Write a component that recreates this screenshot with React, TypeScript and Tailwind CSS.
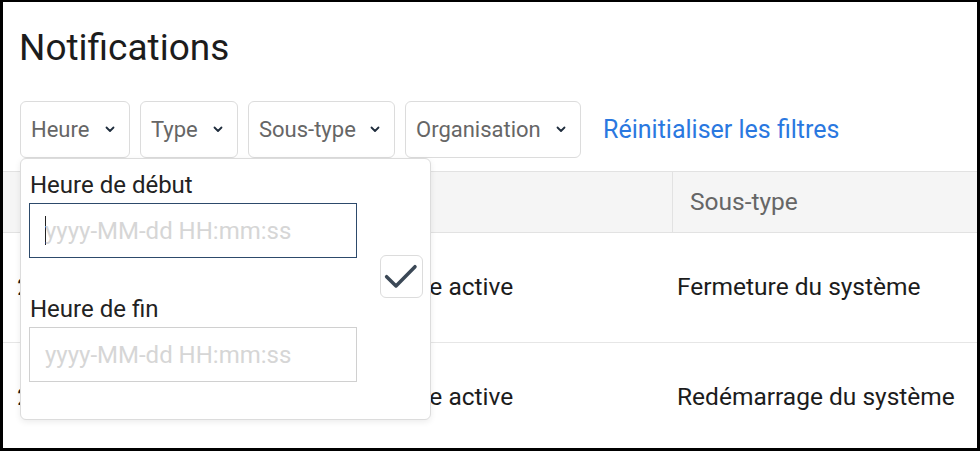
import { useState } from "react";

const font = { fontFamily: "Roboto, 'Noto Sans', sans-serif" };

const filters = [
  { label: "Heure", width: "w-[110px]" },
  { label: "Type", width: "w-[98px]" },
  { label: "Sous-type", width: "w-[147px]" },
  { label: "Organisation", width: "w-[176px]" },
];

const rows = [
  { date: "2024-03-12 08:14:52", type: "Licence active", subtype: "Fermeture du système" },
  { date: "2024-03-12 07:58:03", type: "Licence active", subtype: "Redémarrage du système" },
];

function Chevron() {
  return (
    <svg width="10" height="7" viewBox="0 0 10 7" fill="none">
      <polyline points="1.5,1.5 5,5 8.5,1.5" stroke="#1f2d3d" strokeWidth="1.8" strokeLinecap="round" strokeLinejoin="round" />
    </svg>
  );
}

function DateInput({ focused }: { focused?: boolean }) {
  return (
    <div
      className={`mt-[3px] flex h-[55px] w-[328px] items-center border px-[15px] ${
        focused ? "border-[#2d4a6b]" : "border-[#d0d0d0]"
      }`}
    >
      {focused && <span className="mr-[-1px] h-[29px] w-px bg-[#222]" />}
      <span className="text-[24px] leading-[28px] text-[#d6d6d6]">yyyy-MM-dd HH:mm:ss</span>
    </div>
  );
}

export default function App() {
  const [open] = useState(true);

  return (
    <div className="h-[451px] w-[980px] bg-black pb-[3px] pl-[3px] pr-[3px] pt-[2px]" style={font}>
      <div className="relative h-full w-full overflow-hidden bg-white">
        <h1 className="pl-[16px] pt-[24px] text-[37px] font-normal leading-[44px] text-[#1c1c1c]">Notifications</h1>

        <div className="mt-[31px] flex items-center gap-[10px] pl-[17px]">
          {filters.map((f) => (
            <button
              key={f.label}
              className={`flex h-[57px] items-center justify-between rounded-md border border-[#dcdcdc] bg-white pl-[10px] pr-[14px] ${f.width}`}
            >
              <span className="text-[22px] text-[#666]">{f.label}</span>
              <Chevron />
            </button>
          ))}
          <a className="ml-[12px] text-[25px] text-[#2a78e0]">Réinitialiser les filtres</a>
        </div>

        <div className="mt-[13px]">
          <div className="flex h-[62px] border-y border-[#e2e2e2] bg-[#f5f5f5] text-[24.5px] text-[#666]">
            <div className="flex w-[300px] items-center pl-[18px]">Heure</div>
            <div className="flex w-[369px] items-center pl-[55px]">Type</div>
            <div className="flex flex-1 items-center border-l border-[#e2e2e2] pl-[17px]">Sous-type</div>
          </div>
          {rows.map((r) => (
            <div key={r.subtype} className="flex h-[110px] border-b border-[#e6e6e6] text-[24.5px] text-[#1c1c1c]">
              <div className="flex w-[300px] items-center pl-[14px]">{r.date}</div>
              <div className="flex w-[369px] items-center pl-[55px]">{r.type}</div>
              <div className="flex flex-1 items-center pl-[5px]">{r.subtype}</div>
            </div>
          ))}
        </div>

        {open && (
          <div className="absolute left-[17px] top-[156px] flex w-[411px] items-center rounded-md border border-[#dcdcdc] bg-white pb-[37px] pl-[8px] pr-[7px] pt-[11px] shadow-[0_2px_6px_rgba(0,0,0,0.08)]">
            <div className="flex flex-col">
              <label className="pl-[1px] text-[24px] leading-[30px] text-[#222]">Heure de début</label>
              <DateInput focused />
              <label className="mt-[36px] pl-[1px] text-[24px] leading-[30px] text-[#222]">Heure de fin</label>
              <DateInput />
            </div>
            <button className="ml-auto flex h-[43px] w-[43px] items-center justify-center rounded-md border border-[#dcdcdc] bg-white">
              <svg width="41" height="41" viewBox="0 0 41 41" fill="none">
                <polyline points="5.6,20.7 15,30 34,10.7" stroke="#3b4856" strokeWidth="3.5" strokeLinecap="round" strokeLinejoin="round" />
              </svg>
            </button>
          </div>
        )}
      </div>
    </div>
  );
}
